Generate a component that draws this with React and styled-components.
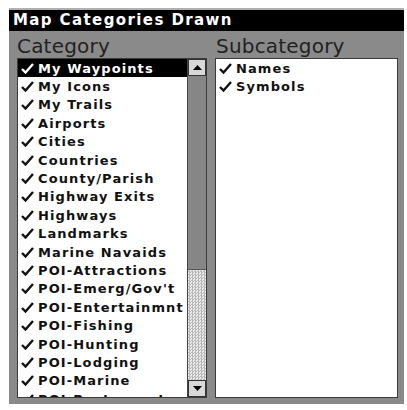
import React from "react";
import styled, { createGlobalStyle } from "styled-components";

const Global = createGlobalStyle`
  html, body { margin: 0; padding: 0; background: #fff; }
  body { font-family: "DejaVu Sans", "Liberation Sans", sans-serif; }
`;

const Panel = styled.div`
  margin: 8px 0 0 9px;
  width: 395px;
  height: 396px;
  background: #8a8a8a;
  border-top: 2px solid #b0b0b0;
  box-sizing: border-box;
  display: flex;
  flex-direction: column;
`;

const TitleBar = styled.div`
  height: 21px;
  background: #000;
  color: #fff;
  font-family: "DejaVu Sans", sans-serif;
  font-weight: bold;
  font-size: 15px;
  letter-spacing: 1.4px;
  line-height: 21px;
  padding-left: 4px;
`;

const Columns = styled.div`
  flex: 1;
  display: grid;
  grid-template-columns: 190px 183px;
  column-gap: 8px;
  padding: 0 6px 6px 8px;
  min-height: 0;
`;

const Column = styled.div`
  display: flex;
  flex-direction: column;
  min-height: 0;
`;

const Heading = styled.div`
  height: 27px;
  color: #222;
  font-family: "DejaVu Sans", sans-serif;
  font-size: 20px;
  line-height: 30px;
  padding-left: ${(p) => p.$indent || 0}px;
  letter-spacing: 0.2px;
`;

const ListBox = styled.div`
  flex: 1;
  background: #fff;
  border: 1px solid #3a3a3a;
  display: flex;
  overflow: hidden;
  min-height: 0;
`;

const Items = styled.div`
  flex: 1;
  display: flex;
  flex-direction: column;
  overflow: hidden;
`;

const Row = styled.div`
  height: 18.4px;
  flex-shrink: 0;
  display: flex;
  align-items: center;
  gap: 4px;
  padding-left: 3px;
  background: ${(p) => (p.$selected ? "#000" : "transparent")};
  color: ${(p) => (p.$selected ? "#fff" : "#111")};
  font-family: "DejaVu Sans", sans-serif;
  font-weight: bold;
  font-size: 13px;
  letter-spacing: 1.1px;
  white-space: nowrap;
`;

const ScrollBar = styled.div`
  width: 18px;
  flex-shrink: 0;
  border-left: 1px solid #444;
  display: flex;
  flex-direction: column;
  background: repeating-conic-gradient(#b8b8b8 0 25%, #ececec 0 50%) 0 0 / 3px 3px;
`;

const Arrow = styled.div`
  height: 17px;
  flex-shrink: 0;
  background: #d8d8d8;
  border: 1px solid #333;
  box-sizing: border-box;
  display: flex;
  align-items: center;
  justify-content: center;
`;

const Thumb = styled.div`
  height: 193px;
  flex-shrink: 0;
  background: #868686;
  border-bottom: 1px solid #555;
`;

const Track = styled.div`
  flex: 1;
`;

const Check = ({ color }) => (
  <svg width="13" height="11" viewBox="0 0 13 11">
    <path d="M1 6 L4.5 9.5 L12 1" fill="none" stroke={color} strokeWidth="2.4" />
  </svg>
);

const Tri = ({ up }) => (
  <svg width="9" height="5" viewBox="0 0 9 5">
    <path d={up ? "M0 5 L4.5 0 L9 5 Z" : "M0 0 L4.5 5 L9 0 Z"} fill="#000" />
  </svg>
);

const categories = [
  "My Waypoints",
  "My Icons",
  "My Trails",
  "Airports",
  "Cities",
  "Countries",
  "County/Parish",
  "Highway Exits",
  "Highways",
  "Landmarks",
  "Marine Navaids",
  "POI-Attractions",
  "POI-Emerg/Gov't",
  "POI-Entertainmnt",
  "POI-Fishing",
  "POI-Hunting",
  "POI-Lodging",
  "POI-Marine",
  "POI-Restaurant",
];

const subcategories = ["Names", "Symbols"];

export default function App() {
  return (
    <>
      <Global />
      <Panel>
        <TitleBar>Map Categories Drawn</TitleBar>
        <Columns>
          <Column>
            <Heading>Category</Heading>
            <ListBox>
              <Items>
                {categories.map((c, i) => (
                  <Row key={c} $selected={i === 0}>
                    <Check color={i === 0 ? "#fff" : "#111"} />
                    {c}
                  </Row>
                ))}
              </Items>
              <ScrollBar>
                <Arrow>
                  <Tri up />
                </Arrow>
                <Thumb />
                <Track />
                <Arrow>
                  <Tri />
                </Arrow>
              </ScrollBar>
            </ListBox>
          </Column>
          <Column>
            <Heading $indent={1}>Subcategory</Heading>
            <ListBox>
              <Items>
                {subcategories.map((s) => (
                  <Row key={s}>
                    <Check color="#111" />
                    {s}
                  </Row>
                ))}
              </Items>
            </ListBox>
          </Column>
        </Columns>
      </Panel>
    </>
  );
}
